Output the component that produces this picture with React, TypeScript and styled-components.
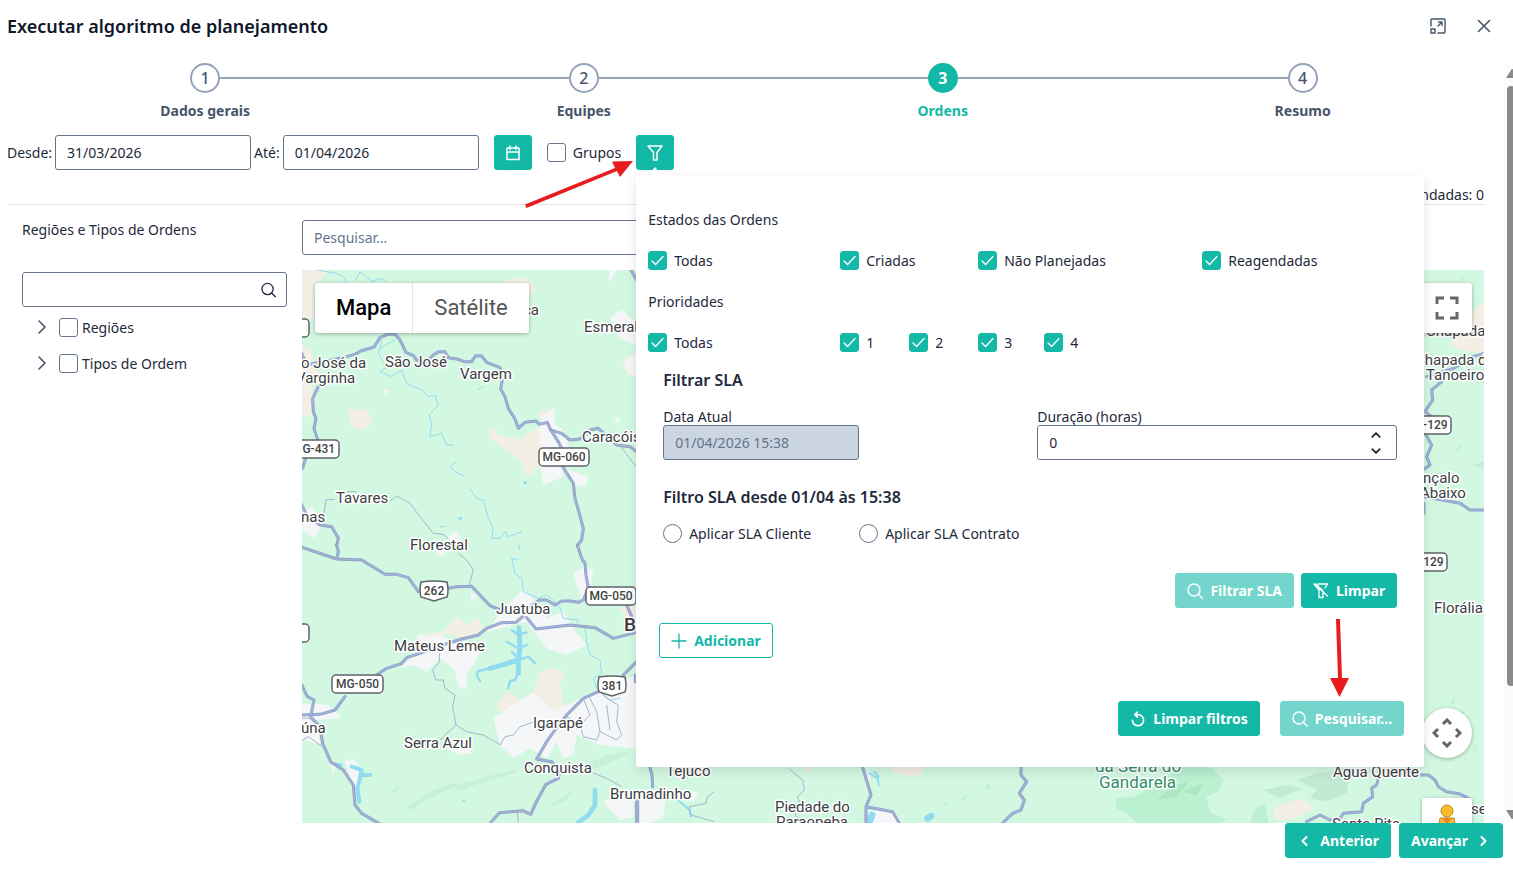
import React from "react";
import styled, { createGlobalStyle } from "styled-components";

const teal = "#14b8a6";
const tealSoft = "#73d5cb";
const slate = "#475569";
const edge = "#64748b";
const ink = "#1e293b";

const Global = createGlobalStyle`
  * { box-sizing: border-box; }
  body { margin: 0; background: #fff; color: ${ink}; font: 14px/20px "Noto Sans", "Open Sans", sans-serif; }
  button, input { font: inherit; color: inherit; }
  button { cursor: pointer; }
  svg { display: block; }
`;

const Dialog = styled.main`
  display: flex;
  flex-direction: column;
  min-height: 100vh;
  overflow: hidden;
`;

const Header = styled.header`
  display: flex;
  align-items: center;
  justify-content: space-between;
  height: 63px;
  padding: 0 20px 12px 7px;
`;

const Title = styled.h1`
  margin: 0;
  font-size: 18px;
  line-height: 24px;
  font-weight: 600;
  color: #0f172a;
`;

const HeaderActions = styled.div`
  display: flex;
  gap: 28px;
`;

const IconButton = styled.button`
  display: grid;
  place-items: center;
  width: 18px;
  height: 18px;
  padding: 0;
  border: 0;
  background: none;
  color: ${slate};
`;

const Body = styled.div`
  display: flex;
`;

const Content = styled.div`
  flex: 1;
  min-width: 0;
  padding: 0 19px 0 7px;
`;

const ScrollTrack = styled.div`
  display: flex;
  flex-direction: column;
  justify-content: space-between;
  width: 10px;
  padding: 6px 0 4px 3px;
  background: #fbfbfb;
  overflow: hidden;
`;

const ScrollThumb = styled.div`
  flex: 0 0 80%;
  width: 8px;
  margin: 8px 0 auto 1px;
  border-radius: 4px;
  background: #8b8b8b;
`;

const Steps = styled.ol`
  display: flex;
  margin: 0;
  padding: 0;
  list-style: none;
`;

const Step = styled.li<{ $active?: boolean }>`
  flex: 1 1 auto;
  display: flex;
  flex-direction: column;
  gap: 8px;
  text-align: center;
  font-weight: 700;
  color: ${(p) => (p.$active ? teal : slate)};
`;

const StepTrack = styled.div`
  display: flex;
  align-items: center;
`;

const StepLine = styled.span<{ $hidden?: boolean }>`
  flex: 1;
  height: 2px;
  background: ${(p) => (p.$hidden ? "transparent" : "#94a3b8")};
`;

const StepCircle = styled.span<{ $active?: boolean }>`
  display: grid;
  place-items: center;
  width: 30px;
  height: 30px;
  border: 2px solid ${(p) => (p.$active ? teal : "#94a3b8")};
  border-radius: 50%;
  background: ${(p) => (p.$active ? teal : "#fff")};
  color: ${(p) => (p.$active ? "#fff" : slate)};
  font-size: 16px;
  font-weight: ${(p) => (p.$active ? 700 : 500)};
`;

const Toolbar = styled.div`
  display: flex;
  align-items: center;
  gap: 15px;
  margin-top: 14px;
`;

const DateGroup = styled.div`
  display: flex;
  align-items: center;
  gap: 3px;
`;

const TextInput = styled.input<{ $width?: string }>`
  width: ${(p) => p.$width ?? "100%"};
  height: 35px;
  padding: 0 11px;
  border: 1px solid ${edge};
  border-radius: 3px;
  background: #fff;
  outline: 0;
  &::placeholder { color: ${edge}; opacity: 1; }
  &:disabled { background: #cbd5e1; color: ${edge}; }
`;

const Button = styled.button<{ $kind?: "solid" | "soft" | "outline"; $square?: boolean }>`
  display: flex;
  align-items: center;
  justify-content: center;
  gap: 7px;
  height: 35px;
  ${(p) => (p.$square ? "width: 38px; padding: 0;" : "padding: 0 11px;")}
  border: 1px solid ${(p) => (p.$kind === "soft" ? tealSoft : teal)};
  border-radius: 3px;
  background: ${(p) => (p.$kind === "soft" ? tealSoft : p.$kind === "outline" ? "#fff" : teal)};
  color: ${(p) => (p.$kind === "outline" ? teal : "#fff")};
  font-weight: 700;
  white-space: nowrap;
`;

const CheckLabel = styled.label<{ $gap?: number }>`
  display: flex;
  align-items: center;
  gap: ${(p) => p.$gap ?? 7}px;
  line-height: 21px;
  white-space: nowrap;
`;

const CheckWrap = styled.span`
  display: grid;
  place-items: center;
  > * { grid-area: 1 / 1; }
  svg { pointer-events: none; visibility: hidden; z-index: 1; }
  input:checked + svg { visibility: visible; }
`;

const CheckInput = styled.input`
  appearance: none;
  width: 19px;
  height: 19px;
  margin: 0;
  border: 1px solid ${edge};
  border-radius: ${(p) => (p.type === "radio" ? "50%" : "3px")};
  background: #fff;
  &:checked { border-color: ${teal}; background: ${teal}; }
`;

const FilterAnchor = styled.div`
  position: relative;
`;

const Notch = styled.span`
  position: absolute;
  z-index: 4;
  left: 12px;
  bottom: -6px;
  border: 7px solid transparent;
  border-top-width: 0;
  border-bottom: 9px solid #fff;
`;

const Popup = styled.section`
  position: absolute;
  z-index: 3;
  top: calc(100% + 5px);
  left: 0;
  width: 788px;
  padding: 35px 0 31px;
  border-radius: 3px;
  background: #fff;
  box-shadow: 0 4px 12px rgba(0, 0, 0, 0.12);
`;

const FilterGroup = styled.fieldset`
  margin: 0 0 21px;
  padding: 0 12px;
  border: 0;
  & + & { margin-bottom: 17px; }
`;

const Legend = styled.legend`
  padding: 0;
  margin-bottom: 20px;
`;

const CheckGrid = styled.div<{ $columns: string }>`
  display: grid;
  grid-template-columns: ${(p) => p.$columns};
`;

const SlaBlock = styled.div`
  padding: 0 27px;
`;

const SlaTitle = styled.h2`
  margin: 0;
  font-size: 16px;
  line-height: 20px;
  font-weight: 600;
`;

const SlaFields = styled.div`
  display: grid;
  grid-template-columns: 1fr 1fr;
  gap: 14px;
  margin: 19px 0 27px;
`;

const Field = styled.div`
  display: flex;
  flex-direction: column;
  line-height: 16px;
`;

const SpinBox = styled.div`
  display: flex;
  align-items: center;
  height: 35px;
  padding-right: 13px;
  border: 1px solid ${edge};
  border-radius: 3px;
  input { border: 0; height: 33px; }
`;

const SpinButtons = styled.div`
  display: flex;
  flex-direction: column;
  gap: 3px;
`;

const SpinButton = styled.button`
  display: grid;
  place-items: center;
  width: 14px;
  height: 13px;
  padding: 0;
  border: 0;
  background: none;
`;

const RadioRow = styled.div`
  display: grid;
  grid-template-columns: 196px 1fr;
  margin: 16px 0 29px;
`;

const ButtonRow = styled.div<{ $gap: number; $pad?: string }>`
  display: flex;
  justify-content: flex-end;
  gap: ${(p) => p.$gap}px;
  padding: ${(p) => p.$pad ?? "0"};
`;

const AddRow = styled.div`
  display: flex;
  padding: 15px 23px 43px;
`;

const Totals = styled.div`
  padding-top: 16px;
  border-bottom: 1px solid #e2e5e9;
  line-height: 18px;
  text-align: right;
`;

const Columns = styled.div`
  display: grid;
  grid-template-columns: 265px minmax(0, 1fr);
  gap: 15px;
  padding: 15px 0 0 15px;
`;

const SidePanel = styled.aside``;

const SideTitle = styled.p`
  margin: 0 0 32px;
`;

const SideSearch = styled.div`
  display: flex;
  align-items: center;
  height: 35px;
  padding-right: 10px;
  border: 1px solid ${edge};
  border-radius: 3px;
  input { border: 0; height: 33px; }
`;

const Tree = styled.ul`
  margin: 2px 0 0;
  padding: 0 0 0 11px;
  list-style: none;
`;

const TreeRow = styled.li`
  display: flex;
  align-items: center;
  gap: 8px;
  height: 36px;
`;

const MapColumn = styled.div`
  display: flex;
  flex-direction: column;
  gap: 15px;
`;

const MapFrame = styled.div`
  position: relative;
  height: 553px;
  overflow: hidden;
  background: #d3f8e2;
  font-family: Roboto, sans-serif;
`;

const MapTypes = styled.div`
  position: absolute;
  top: 13px;
  left: 13px;
  display: flex;
  height: 50px;
  border-radius: 3px;
  background: #fff;
  box-shadow: 0 1px 4px rgba(0, 0, 0, 0.3);
`;

const MapType = styled.button<{ $active?: boolean }>`
  padding: 0 21px;
  border: 0;
  border-left: ${(p) => (p.$active ? "0" : "1px solid #e6e6e6")};
  background: none;
  color: ${(p) => (p.$active ? "#000" : "#565656")};
  font-size: 22px;
  line-height: 30px;
  font-weight: ${(p) => (p.$active ? 500 : 400)};
`;

const MapControl = styled.button<{ $top: number; $round?: boolean }>`
  position: absolute;
  top: ${(p) => p.$top}px;
  right: 12px;
  display: grid;
  place-items: center;
  width: 50px;
  height: 50px;
  padding: 0;
  border: 0;
  border-radius: ${(p) => (p.$round ? "50%" : "3px")};
  background: #fff;
  color: #666;
  box-shadow: 0 1px 4px rgba(0, 0, 0, 0.3);
`;

const Footer = styled.footer`
  display: flex;
  justify-content: flex-end;
  gap: 8px;
  padding: 0 10px 13px;
`;

const RangeArrow = styled.svg`
  position: absolute;
  z-index: 5;
  top: 20px;
  right: 38px;
  pointer-events: none;
`;

const SearchArrow = styled.svg`
  position: absolute;
  right: 75px;
  top: 443px;
  pointer-events: none;
`;

type IconProps = { size?: number; width?: number; children: React.ReactNode };
const Icon = ({ size = 16, width = 1.4, children }: IconProps) => (
  <svg width={size} height={size} viewBox="0 0 16 16" fill="none" stroke="currentColor" strokeWidth={width} strokeLinecap="round" strokeLinejoin="round" aria-hidden="true">
    {children}
  </svg>
);

const SearchIcon = () => (
  <Icon><circle cx="7" cy="7" r="6" /><path d="M11.3 11.3 15.3 15.3" /></Icon>
);

function Check({ id, label, type = "checkbox", checked, gap, name }: { id: string; label: string; type?: string; checked?: boolean; gap?: number; name?: string }) {
  return (
    <CheckLabel htmlFor={id} $gap={gap}>
      <CheckWrap>
        <CheckInput id={id} type={type} name={name} defaultChecked={checked} />
        <svg width="13" height="13" viewBox="0 0 13 13" fill="none" stroke="#fff" strokeWidth="1.3" strokeLinecap="round" strokeLinejoin="round">
          <path d="M1 7 4.6 10.5 12 2.5" />
        </svg>
      </CheckWrap>
      {label}
    </CheckLabel>
  );
}

const Roads = ({ d }: { d: string }) => (
  <g fill="none" strokeLinejoin="round" strokeLinecap="round">
    <path d={d} stroke="#8a9bc6" strokeWidth="9" />
    <path d={d} stroke="#a3b2d6" strokeWidth="5" />
  </g>
);
const Lanes = ({ d }: { d: string }) => <path d={d} fill="none" stroke="#a6b2cf" strokeWidth="3" strokeLinejoin="round" />;
const Streams = ({ d, w = 3 }: { d: string; w?: number }) => <path d={d} fill="none" stroke="#90dbef" strokeWidth={w} strokeLinejoin="round" strokeLinecap="round" />;
const Urban = ({ d }: { d: string }) => <path d={d} fill="#f5f6f8" />;
const Soil = ({ d }: { d: string }) => <path d={d} fill="#f4efe5" />;
const Wood = ({ d }: { d: string }) => <path d={d} fill="#bbf0d1" />;

const Tile = ({ x, y, children }: { x: number; y: number; children: React.ReactNode }) => (
  <g transform={`translate(${x} ${y}) scale(.33333)`}>{children}</g>
);

const places: [number, number, string][] = [
  [523, 315, "ca"], [584, 332, "Esmeraldas"], [385, 367, "São José"], [460, 379, "Vargem"],
  [284, 368, "São José da"], [296, 383, "Varginha"], [582, 442, "Caracóis"], [336, 503, "Tavares"],
  [301, 522, "nas"], [410, 550, "Florestal"], [496, 614, "Juatuba"], [394, 651, "Mateus Leme"],
  [404, 748, "Serra Azul"], [533, 728, "Igarapé"], [524, 773, "Conquista"], [301, 733, "úna"],
  [666, 776, "Tejuco"], [610, 799, "Brumadinho"], [775, 812, "Piedade do"], [776, 827, "Paraopeba"],
  [1426, 336, "Chapada"], [1415, 365, "Chapada do"], [1426, 380, "Tanoeiro"], [1423, 483, "nçalo"],
  [1420, 498, "Abaixo"], [1434, 613, "Florália"], [1333, 777, "Água Quente"], [1332, 829, "Santa Rita"], [1471, 814, "se"],
];

const shields: [number, number, number, string][] = [
  [288, 440, 51, "MG-431"], [539, 448, 50, "MG-060"], [332, 675, 51, "MG-050"], [586, 587, 50, "MG-050"],
  [1401, 416, 50, "MG-129"], [1397, 553, 50, "MG-129"], [288, 319, 21, ""], [288, 624, 21, ""],
];

function MapDrawing() {
  return (
    <svg width="100%" height="553" viewBox="302 270 1182 553" preserveAspectRatio="xMidYMid slice" role="img" aria-label="Mapa">
      <Tile x={300} y={265}>
        <Soil d="M0 15H85L62 45 40 52 42 160 0 165ZM0 240 30 250 40 275 36 300 60 330 30 350 40 390 34 450 0 460ZM618 48 640 40 685 42 706 65 700 90 640 80ZM145 432 200 435 218 460 205 485 180 495 150 480ZM565 515 575 490 590 492 590 510 625 515 660 525 690 500 735 480 715 445 735 430 745 450 725 600 705 605 700 630 680 632 660 585 640 570 615 555Z" />
        <Soil d="M965 290 1000 265 1010 265V335L985 330Z" />
        <Urban d="M735 445 762 428 765 480 790 495 805 540 800 590 785 600 790 635 730 660 720 600 725 540 715 495ZM930 160 965 135 1008 170V240L960 220ZM925 45 930 15 950 15 930 48ZM250 370 270 378 258 392ZM0 740 40 725 60 790 45 820 0 790ZM800 612 865 635 855 665 825 660ZM940 470 960 455 955 475ZM975 285 1008 265V332L985 325ZM440 820 465 798 480 820 475 840 440 840Z" />
        <Streams d="M50 15 110 25 130 35 140 55M165 48 180 20 215 50 240 40 255 48M240 250 285 225M245 225 235 265 250 295 270 300 240 320 275 335 305 315 320 355 365 375 385 395 405 390 415 420 388 450 395 480 390 515 425 505 440 540 460 540M470 590 450 605 465 620 490 632M510 672 530 700 550 705 565 760 580 790 575 820 600 820 615 800 625 815 665 800M535 373 550 365M420 785 432 785" />
        <circle cx="481" cy="760" r="5" fill="#90dbef" /><circle cx="676" cy="653" r="5" fill="#90dbef" />
        <Lanes d="M72 745 78 705 105 703M270 708 290 693 330 715 360 755 400 805 430 808 445 822M955 535 985 575 1010 605M140 680 170 680" />
        <Roads d="M5 265 20 300 60 292 120 280 165 268 182 258 222 246 240 218 262 208 285 207 300 225 318 262 340 272 350 285 380 290 400 270 415 260 435 260 445 278 475 283 492 290 515 290 527 272 545 273 560 292 600 308 608 340 602 372 615 395 625 430 645 462 655 490 675 472 708 468 718 478 742 472 752 495 785 505 810 525 840 522 870 495 895 490 950 540 990 545 1010 560" />
        <Roads d="M752 495 775 530 785 550 785 600 820 655 825 700 838 745 850 790 845 825 832 842M55 365 38 400 40 440 48 460 42 490 55 530M20 570 8 610M0 710 20 750 60 780 95 785 115 820 110 842M993 15 1010 45" />
      </Tile>
      <Tile x={300} y={545}>
        <Soil d="M375 265 430 260 470 215 500 240 530 215 548 245 530 270 490 280 440 265 410 285ZM690 460 720 385 750 368 795 380 780 420 795 500 760 510 740 480ZM590 480 620 440 655 460 640 510 600 500ZM960 190 1010 180V230L980 220Z" />
        <Urban d="M300 370 360 310 350 270 430 275 470 300 560 290 530 340 500 390 500 430 480 430 460 370 420 340 380 380 340 360ZM610 190 670 135 720 180 740 220 790 200 830 265 860 300 800 330 740 310 680 230 560 260ZM820 85 850 65 880 75 865 160 845 170ZM510 145 530 150 515 175ZM580 520 700 440 760 500 880 440 1010 390V610L900 600 830 570 820 630 790 640 770 590 740 640 690 610 640 640 600 600ZM0 475 85 480 125 520 50 525 60 600 0 580ZM135 650 160 640 190 690 170 740 150 700ZM90 650 110 650 100 690ZM400 10 450 10 425 35ZM440 610 500 580 515 625 480 630ZM910 770 960 745 1000 760V815L960 825Z" />
        <Streams w={15} d="M657 248 660 310 655 350 655 385M655 345 600 362 570 370" />
        <Streams w={7} d="M635 255 655 270 680 262M620 290 655 310 680 300M655 345 685 335 705 355M655 385 645 405 630 408 625 430M570 370 535 378 530 390 540 408M635 320 655 340M105 655 125 660" />
        <Streams w={12} d="M155 665 185 675 180 700 172 730 178 770M185 690 210 690" />
        <Streams w={14} d="M885 735 885 780 865 810 835 833" />
        <Streams d="M655 0 660 15M655 45 635 40 645 85 665 100 670 140 715 160 740 150 760 165 780 190 790 220 835 225 830 240M855 245 860 290 870 330 900 345 905 385 880 400 890 430 930 465 960 460" />
        <circle cx="491" cy="767" r="4" fill="#90dbef" />
        <path d="M320 785 400 735 470 712 480 720 400 755 330 795ZM470 720 580 690 660 670 640 685 540 715 470 740ZM830 670 920 630 990 620 930 655 850 685ZM270 740 300 720 285 745ZM740 790 820 735 800 765Z" fill="#c8efd8" />
        <Lanes d="M475 25 500 45 520 75 508 120M418 325 418 350 398 375 408 405 430 405 435 430 465 450 458 485 468 540 420 585M468 540 500 560 550 570 585 590 600 600 615 575 640 570 660 545 705 530M870 680 920 700 965 725M850 460 870 510 840 540 850 575 890 585 900 560 950 585 965 570 950 530 955 480 920 460 900 440M870 460 890 500 900 560M920 480 930 555M800 515 840 535M652 800 655 833M0 520 30 520 55 545M0 590 25 575 68 605" />
        <Roads d="M832 0 845 40 855 55 858 90 865 130 850 165 835 172 810 168 785 168 765 180 740 165 718 165 690 185M110 0 115 20 110 42M0 5 110 42 185 45 255 88 290 88 325 98 355 140M445 130 470 125 515 124 570 182 600 195M0 510 60 508 105 495 135 455M230 390 260 370 305 355 320 338 350 328 430 300 485 282 535 270 560 250 605 233 648 232 668 215M680 218 708 252 765 245 810 240 885 248 940 280 1010 262M980 180 995 215" />
        <Roads d="M5 420 22 455 42 465 32 515 60 545 68 595 92 650 130 675 160 720 165 780 185 805 245 840M572 833 598 803 668 797 692 808 712 765 738 718 775 700 778 680 755 650 710 642 740 590 765 555 800 510 850 460 895 440M970 390 1010 350M1006 390V410M1010 770V833" />
      </Tile>
      <Tile x={636} y={480}>
        <Soil d="M755 855H865L855 885 820 890 780 880ZM500 865 530 855 510 878Z" />
        <Urban d="M0 940 60 930 90 960 80 1015 40 1029H0ZM130 930 185 935 175 965 140 960ZM700 990 780 1000 800 1029H695ZM690 865 705 880 700 915Z" />
        <Streams d="M120 955 160 990 165 1010M700 880 725 895 728 915M715 875 728 890" w={6} />
        <Streams w={20} d="M708 1005 700 1029M875 1015 885 1008" />
        <Lanes d="M235 935 215 950 210 970 160 980 165 1005 235 1025M460 865 475 880 500 900 505 930 485 950 495 980 475 985 480 1010 530 1029" />
        <Roads d="M40 855 48 885 50 920M5 960V1029M678 855 705 945 690 980 770 995 790 1029M690 980 690 1029M1155 855 1155 885 1172 905 1150 940 1165 960 1155 990 1130 1000 1100 1029" />
        <path d="M975 955 995 940 985 965ZM1050 910 1065 920 1052 930ZM920 965 935 965 930 980Z" fill="#c5edd6" />
      </Tile>
      <Tile x={1060} y={550}>
        <Wood d="M165 745 225 740 300 690 370 650 450 650 490 690 475 725 440 740 450 785 500 810 480 819H230L200 790 170 780ZM590 770 615 765 625 819H570Z" />
        <path d="M610 720 680 705 730 715 660 745ZM710 690 770 670 830 665 865 690 860 730 800 755 750 745 770 720Z" fill="#c2ead3" />
        <path d="M290 750 340 710 390 690 350 740ZM370 725 430 700 410 735Z" fill="#ace6c5" />
        <Soil d="M640 775 720 745 768 775 700 808 645 810Z" />
        <path d="M1170 460 1182 440 1185 465ZM1195 490 1215 480 1205 510ZM1240 600 1250 580V605Z" fill="#c5edd6" />
        <Roads d="M955 685 950 705 935 715 938 740 910 760 905 785 850 790 840 805 810 810 780 795 740 815M1080 675 1105 675 1125 690 1135 710 1160 725 1200 732 1225 745" />
      </Tile>
      <Tile x={1030} y={230}>
        <Soil d="M1362 215 1320 250 1300 305 1260 340 1285 360 1362 370Z" />
        <path d="M1285 145 1310 138 1300 150ZM1325 705 1362 695V712ZM1275 660 1300 640 1285 662Z" fill="#c5edd6" />
        <Roads d="M1362 370 1330 380 1270 415 1190 440M1235 455 1205 480 1208 510 1185 545 1205 560M1185 610 1205 645 1190 680 1200 705 1182 718M1182 800 1290 820 1320 840H1362M1182 820V850" />
      </Tile>
      <g fontFamily="Roboto, sans-serif" fontSize="15" fill="#3c4043" stroke="#fff" strokeWidth="3" strokeLinejoin="round" paintOrder="stroke">
        {places.map(([x, y, name]) => <text key={name} x={x} y={y}>{name}</text>)}
        <text x="624" y="631" fontSize="19" fontWeight="500">Betim</text>
        <g fontSize="17" fill="#2f8f68">
          <text x="1095" y="772">da Serra do</text>
          <text x="1099" y="788">Gandarela</text>
        </g>
      </g>
      <g fontFamily="Roboto, sans-serif" fontSize="12" fontWeight="500" fill="#444" textAnchor="middle">
        {shields.map(([x, y, w, name]) => (
          <g key={`${x}-${y}`}>
            <rect x={x} y={y} width={w} height="18" rx="4" fill="#fff" stroke="#5f6368" strokeWidth="1.5" />
            <text x={x + w / 2} y={y + 13}>{name}</text>
          </g>
        ))}
        {([[434, 591, "262"], [612, 686, "381"]] as [number, number, string][]).map(([x, y, name]) => (
          <g key={name} transform={`translate(${x} ${y})`}>
            <path d="M-13-9Q0-11 13-9Q15 0 13 6L0 10-13 6Q-15 0-13-9Z" fill="#fff" stroke="#5f6368" strokeWidth="1.5" />
            <text y="4">{name}</text>
          </g>
        ))}
      </g>
    </svg>
  );
}

const steps = ["Dados gerais", "Equipes", "Ordens", "Resumo"];

function FilterPopup() {
  return (
    <Popup aria-label="Filtros">
      <FilterGroup>
        <Legend>Estados das Ordens</Legend>
        <CheckGrid $columns="192px 138px 224px 1fr">
          <Check id="st-all" label="Todas" checked />
          <Check id="st-new" label="Criadas" checked />
          <Check id="st-unplanned" label="Não Planejadas" checked />
          <Check id="st-re" label="Reagendadas" checked />
        </CheckGrid>
      </FilterGroup>
      <FilterGroup>
        <Legend>Prioridades</Legend>
        <CheckGrid $columns="192px 69px 69px 66px 1fr">
          <Check id="pr-all" label="Todas" checked />
          {["1", "2", "3", "4"].map((n) => <Check key={n} id={`pr-${n}`} label={n} checked />)}
        </CheckGrid>
      </FilterGroup>
      <SlaBlock>
        <SlaTitle>Filtrar SLA</SlaTitle>
        <SlaFields>
          <Field>
            <label htmlFor="now">Data Atual</label>
            <TextInput id="now" $width="196px" defaultValue="01/04/2026 15:38" disabled />
          </Field>
          <Field>
            <label htmlFor="duration">Duração (horas)</label>
            <SpinBox>
              <TextInput id="duration" defaultValue="0" />
              <SpinButtons>
                <SpinButton aria-label="Aumentar"><Icon size={12} width={2.4}><path d="M3 10.5 8 5.5l5 5" /></Icon></SpinButton>
                <SpinButton aria-label="Diminuir"><Icon size={12} width={2.4}><path d="M3 5.5l5 5 5-5" /></Icon></SpinButton>
              </SpinButtons>
            </SpinBox>
          </Field>
        </SlaFields>
        <SlaTitle>Filtro SLA desde 01/04 às 15:38</SlaTitle>
        <RadioRow>
          <Check id="sla-client" name="sla" type="radio" label="Aplicar SLA Cliente" />
          <Check id="sla-contract" name="sla" type="radio" label="Aplicar SLA Contrato" />
        </RadioRow>
        <ButtonRow $gap={7}>
          <Button $kind="soft"><SearchIcon />Filtrar SLA</Button>
          <Button>
            <Icon width={1.3}><path d="M5.2 1H14.6L12 5M1 1l5 6v7.5H10V9M1.6 1 14.5 13M3 1 10 8" /></Icon>
            Limpar
          </Button>
        </ButtonRow>
      </SlaBlock>
      <AddRow>
        <Button $kind="outline"><Icon width={1.3}><path d="M8 1v14M1 8h14" /></Icon>Adicionar</Button>
      </AddRow>
      <ButtonRow $gap={20} $pad="0 20px">
        <Button>
          <Icon width={1.6}><path d="M7.5 1 4.8 3.6 7.5 6.2M4.8 3.6H8a5.6 5.6 0 1 1-5.6 5.6" /></Icon>
          Limpar filtros
        </Button>
        <Button $kind="soft"><SearchIcon />Pesquisar...</Button>
      </ButtonRow>
      <SearchArrow width="20" height="80" viewBox="0 0 20 80" fill="#e81b1e" aria-hidden="true">
        <path d="M7 1h4l2 59h7L10.5 79 1 60h8Z" />
      </SearchArrow>
    </Popup>
  );
}

export default function App() {
  return (
    <>
      <Global />
      <Dialog>
        <Header>
          <Title>Executar algoritmo de planejamento</Title>
          <HeaderActions>
            <IconButton aria-label="Maximizar">
              <Icon><path d="M1 8V2a1 1 0 0 1 1-1h12a1 1 0 0 1 1 1v12a1 1 0 0 1-1 1H8M1 11h4v4H1zM8 8l4-4M8.5 4H12v3.5" /></Icon>
            </IconButton>
            <IconButton aria-label="Fechar">
              <Icon width={1.6}><path d="M2.5 2.5l11 11M13.5 2.5l-11 11" /></Icon>
            </IconButton>
          </HeaderActions>
        </Header>
        <Body>
          <Content>
            <Steps>
              {steps.map((label, i) => (
                <Step key={label} $active={i === 2}>
                  <StepTrack>
                    <StepLine $hidden={i === 0} />
                    <StepCircle $active={i === 2}>{i + 1}</StepCircle>
                    <StepLine $hidden={i === steps.length - 1} />
                  </StepTrack>
                  {label}
                </Step>
              ))}
            </Steps>
            <Toolbar>
              <DateGroup>
                <label htmlFor="from">Desde:</label>
                <TextInput id="from" $width="196px" defaultValue="31/03/2026" />
                <label htmlFor="to">Até:</label>
                <TextInput id="to" $width="196px" defaultValue="01/04/2026" />
              </DateGroup>
              <Button $square aria-label="Calendário">
                <Icon width={1.5}><path d="M2 3h12v11.5H2zM2 7h12M5 1v3.5M11 1v3.5" /></Icon>
              </Button>
              <Check id="groups" label="Grupos" />
              <FilterAnchor>
                <Button $square aria-label="Filtrar">
                  <Icon width={1.5}><path d="M1 1h14l-5 6.5v7.5H6.5V7.5Z" /></Icon>
                </Button>
                <Notch />
                <FilterPopup />
                <RangeArrow width="112" height="54" viewBox="0 0 112 54" fill="#e81b1e" aria-hidden="true">
                  <path d="M1 49.500 91 13l-3-6.500L109 6 96 22l-3-6L2.500 53Z" />
                </RangeArrow>
              </FilterAnchor>
            </Toolbar>
            <Totals>Reagendadas: 0</Totals>
            <Columns>
              <SidePanel>
                <SideTitle>Regiões e Tipos de Ordens</SideTitle>
                <SideSearch>
                  <TextInput aria-label="Buscar regiões e tipos" />
                  <SearchIcon />
                </SideSearch>
                <Tree>
                  {["Regiões", "Tipos de Ordem"].map((label) => (
                    <TreeRow key={label}>
                      <IconButton aria-label={`Expandir ${label}`}>
                        <Icon width={1.6}><path d="M5 2l6 6-6 6" /></Icon>
                      </IconButton>
                      <Check id={label} label={label} gap={4} />
                    </TreeRow>
                  ))}
                </Tree>
              </SidePanel>
              <MapColumn>
                <TextInput $width="75%" placeholder="Pesquisar..." aria-label="Pesquisar" />
                <MapFrame>
                  <MapDrawing />
                  <MapTypes>
                    <MapType $active>Mapa</MapType>
                    <MapType>Satélite</MapType>
                  </MapTypes>
                  <MapControl $top={13} aria-label="Tela cheia">
                    <svg width="24" height="24" viewBox="0 0 24 24" fill="none" stroke="currentColor" strokeWidth="3">
                      <path d="M2 8V2h7M15 2h7v6M22 16v6h-7M9 22H2v-6" />
                    </svg>
                  </MapControl>
                  <MapControl $top={438} $round aria-label="Mover mapa">
                    <svg width="30" height="30" viewBox="0 0 30 30" fill="none" stroke="currentColor" strokeWidth="3">
                      <path d="M11 6l4-4 4 4M11 24l4 4 4-4M6 11l-4 4 4 4M24 11l4 4-4 4" />
                    </svg>
                  </MapControl>
                  <MapControl $top={528} aria-label="Street View">
                    <svg width="22" height="38" viewBox="0 0 22 38" stroke="#b8862b" strokeWidth="1">
                      <path d="M4 14h14l2 12H2Z" fill="#fbbc2c" />
                      <path d="M6 14h10l-5 6Z" fill="#e8832a" stroke="none" />
                      <circle cx="11" cy="7" r="6" fill="#fbbc2c" />
                    </svg>
                  </MapControl>
                </MapFrame>
              </MapColumn>
            </Columns>
          </Content>
          <ScrollTrack aria-hidden="true">
            <svg width="14" height="9" viewBox="0 0 14 9"><path d="M0 9 5 1Q7-1 9 1L14 9Z" fill="#8b8b8b" /></svg>
            <ScrollThumb />
            <svg width="14" height="9" viewBox="0 0 14 9"><path d="M0 0 5 8Q7 10 9 8L14 0Z" fill="#8b8b8b" /></svg>
          </ScrollTrack>
        </Body>
        <Footer>
          <Button><Icon width={2}><path d="M9.5 4 5.5 8l4 4" /></Icon>Anterior</Button>
          <Button>Avançar<Icon width={2}><path d="M6.5 4l4 4-4 4" /></Icon></Button>
        </Footer>
      </Dialog>
    </>
  );
}
